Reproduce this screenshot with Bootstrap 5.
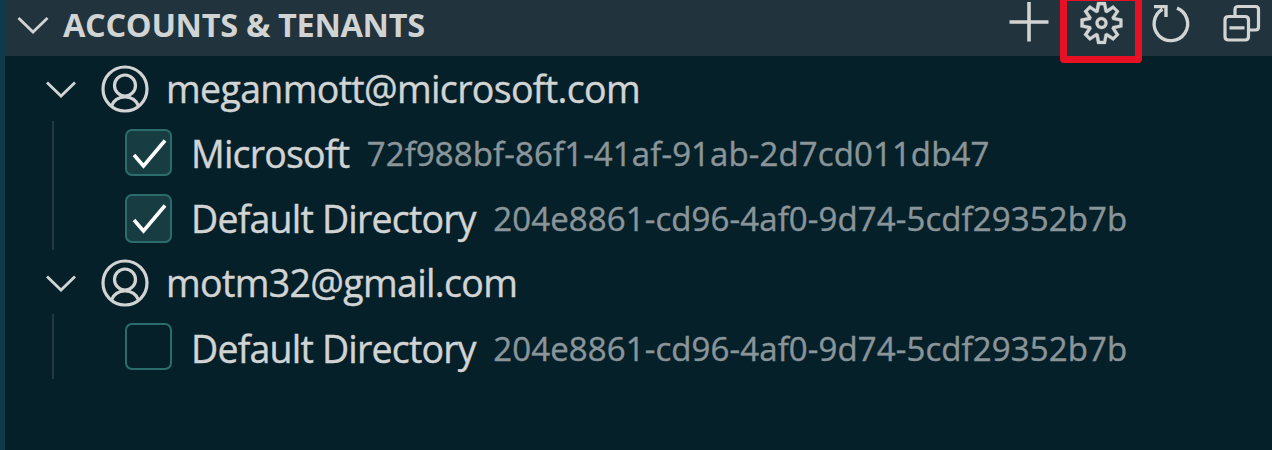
<!DOCTYPE html>
<html lang="en">
<head>
<meta charset="utf-8">
<title>Accounts &amp; Tenants</title>
<link rel="stylesheet" href="https://cdn.jsdelivr.net/npm/bootstrap@5.3.0/dist/css/bootstrap.min.css">
<style>
body{background:#06202a;color:#d2d4d4;font-family:"Open Sans","Noto Sans",sans-serif;height:450px;overflow:hidden}
svg{display:block;flex:none;fill:none;stroke:currentColor}
.panel{height:450px;border-left:5px solid #0e3a4a}
.panel-head{height:56px;background:#21333c;padding-left:12px;padding-right:4px}
.title{font-size:32.5px;font-weight:700;line-height:50px;letter-spacing:-.33px;margin-left:14px}
.tools{gap:21px}
.tool{width:50px;height:48px}
.highlight{width:82px;height:69px;left:-16px;top:-6px;border:7px solid #e81123;border-radius:4px}
.tree{padding-top:1px}
.node{height:64.6px;padding-left:41px}
.leaf{height:64.6px;padding-left:120px}
.name{font-size:37.5px;line-height:64px;white-space:nowrap;-webkit-text-stroke:.4px currentColor}
.mail{margin-left:17px;letter-spacing:-.66px}
.label{margin-left:19px;letter-spacing:-.8px}
.uuid{font-size:33px;color:#8a9599;margin-left:17.500px;line-height:64px;white-space:nowrap;letter-spacing:.1px;-webkit-text-stroke:.4px currentColor}
.avatar{margin-left:25px}
.check{width:47px;height:47px;flex:none;border:2px solid #2b6d6c;border-radius:7px;margin-bottom:3px}
.check.on{background:#173d43;color:#fff}
.leaf + .leaf .check{height:49px;margin-bottom:0}
.leaf + .leaf .name,.leaf + .leaf .uuid,.last .name,.last .uuid{padding-top:2px}
.guide{left:47px;top:-1px;bottom:1px;width:2px;background:#26383f}
</style>
</head>
<body>
<main class="panel">
  <header class="panel-head d-flex justify-content-between align-items-start">
    <div class="d-flex align-items-center">
      <svg width="32" height="48" stroke-width="2.8"><path d="M1.500 17 16 31 30.500 17"/></svg>
      <span class="title">ACCOUNTS &amp; TENANTS</span>
    </div>
    <div class="tools d-flex">
      <div class="tool"><svg width="50" height="48" stroke-width="3.600"><path d="M4.500 22H43.500M24 2V41.500"/></svg></div>
      <div class="tool position-relative">
        <svg width="50" height="48" stroke="none"><path transform="translate(4.500 2) scale(1.750)" fill="currentColor" stroke="currentColor" stroke-width=".2" d="M19.850 8.750l4.090.830v4.840l-4.090.830 2.320 3.490-3.430 3.430-3.490-2.320-.830 4.090H9.580l-.830-4.090-3.490 2.320-3.430-3.430 2.320-3.490L0 14.420V9.580l4.150-.830-2.320-3.490 3.430-3.430 3.490 2.320L9.580 0h4.840l.830 4.150 3.490-2.320 3.430 3.430-2.320 3.490zm-1.570 5.070l4-.810v-2l-4-.810-.540-1.300 2.290-3.430-1.430-1.430-3.430 2.290-1.300-.540-.810-4h-2l-.810 4-1.300.540-3.430-2.290-1.430 1.430L6.380 8.900l-.540 1.300-4 .810v2l4 .810.540 1.300-2.290 3.430 1.430 1.430 3.430-2.290 1.300.540.810 4h2l.810-4 1.300-.540 3.430 2.290 1.430-1.430-2.290-3.430.540-1.300zm-8.186-4.672A3.430 3.430 0 0 1 12 8.570 3.440 3.440 0 0 1 15.430 12a3.430 3.430 0 1 1-5.336-2.852zm.956 4.274c.281.188.612.288.950.288A1.700 1.700 0 0 0 13.710 12a1.710 1.710 0 1 0-2.660 1.422z"/></svg>
        <div class="highlight position-absolute"></div>
      </div>
      <div class="tool"><svg width="50" height="48" stroke-width="3.400"><path d="M30 8.200A16.800 16.800 0 1 1 15.500 9.300M7 6.600H19V17"/></svg></div>
      <div class="tool"><svg width="50" height="48" stroke-width="3.200"><path d="M10 16.500H27Q30.500 16.500 30.500 20V36.500Q30.500 40 27 40H10.500Q7 40 7 36.500V20Q7 16.500 10.500 16.500M11.500 27.800H26.500M17 16V9.500Q17 6.500 20 6.500H37.500Q40.500 6.500 40.500 9.500V27Q40.500 30 37.500 30H31"/></svg></div>
    </div>
  </header>

  <section class="tree">
    <div class="node d-flex align-items-center">
      <svg width="30" height="48" stroke-width="2.800"><path d="M1 17.500 15 31 29 17.500"/></svg>
      <svg class="avatar" width="48" height="48" stroke-width="3.200"><circle cx="24" cy="24" r="22"/><circle cx="24" cy="20.500" r="10.500"/><path d="M10.500 41A14 12.500 0 0 1 37.500 41"/></svg>
      <span class="name mail">meganmott@microsoft.com</span>
    </div>
    <div class="position-relative">
      <div class="guide position-absolute"></div>
      <div class="leaf d-flex align-items-center">
        <div class="check on"><svg width="43" height="43" stroke-width="3.600"><path d="M7 24 16.500 35 38 9.500"/></svg></div>
        <span class="name label">Microsoft</span><span class="uuid">72f988bf-86f1-41af-91ab-2d7cd011db47</span>
      </div>
      <div class="leaf d-flex align-items-center">
        <div class="check on"><svg width="43" height="43" stroke-width="3.600"><path d="M7 24 16.500 35 38 9.500"/></svg></div>
        <span class="name label">Default Directory</span><span class="uuid">204e8861-cd96-4af0-9d74-5cdf29352b7b</span>
      </div>
    </div>
    <div class="node d-flex align-items-center">
      <svg width="30" height="48" stroke-width="2.800"><path d="M1 17.500 15 31 29 17.500"/></svg>
      <svg class="avatar" width="48" height="48" stroke-width="3.200"><circle cx="24" cy="24" r="22"/><circle cx="24" cy="20.500" r="10.500"/><path d="M10.500 41A14 12.500 0 0 1 37.500 41"/></svg>
      <span class="name mail">motm32@gmail.com</span>
    </div>
    <div class="position-relative">
      <div class="guide position-absolute"></div>
      <div class="leaf last d-flex align-items-center">
        <div class="check"></div>
        <span class="name label">Default Directory</span><span class="uuid">204e8861-cd96-4af0-9d74-5cdf29352b7b</span>
      </div>
    </div>
  </section>
</main>
<script src="https://cdn.jsdelivr.net/npm/bootstrap@5.3.0/dist/js/bootstrap.bundle.min.js"></script>
</body>
</html>
